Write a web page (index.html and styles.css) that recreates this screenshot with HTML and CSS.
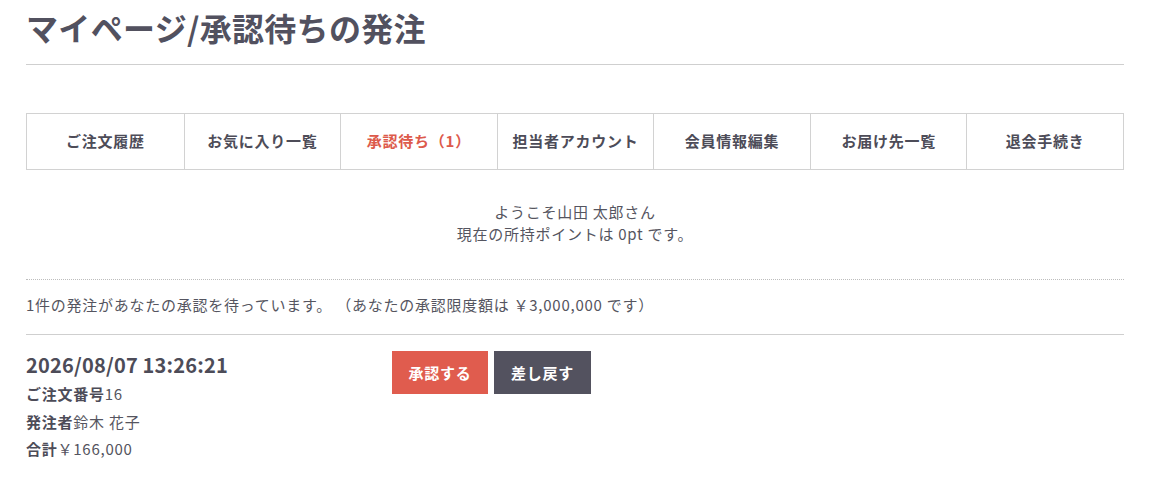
FILE: index.html
```html
<!DOCTYPE html>
<html lang="ja">
<head>
<meta charset="utf-8">
<title>マイページ/承認待ちの発注</title>
<link rel="stylesheet" href="styles.css">
</head>
<body>
<div class="page">
  <h1 class="title">マイページ/承認待ちの発注</h1>
  <nav class="tabs">
    <a class="tab">ご注文履歴</a>
    <a class="tab">お気に入り一覧</a>
    <a class="tab active">承認待ち（1）</a>
    <a class="tab">担当者アカウント</a>
    <a class="tab">会員情報編集</a>
    <a class="tab">お届け先一覧</a>
    <a class="tab">退会手続き</a>
  </nav>
  <div class="welcome">
    <p>ようこそ山田 太郎さん</p>
    <p>現在の所持ポイントは 0pt です。</p>
  </div>
  <p class="notice">1件の発注があなたの承認を待っています。 （あなたの承認限度額は ￥3,000,000 です）</p>
  <div class="order">
    <div class="order-info">
      <div class="order-date">2026/08/07 13:26:21</div>
      <div class="order-line"><b>ご注文番号</b>16</div>
      <div class="order-line"><b>発注者</b>鈴木 花子</div>
      <div class="order-line"><b>合計</b>￥166,000</div>
    </div>
    <div class="order-actions">
      <button class="btn btn-approve">承認する</button>
      <button class="btn btn-return">差し戻す</button>
    </div>
  </div>
</div>
</body>
</html>
```

FILE: styles.css
```css
* { box-sizing: border-box; }
html, body { margin: 0; padding: 0; background: #fff; }
body {
  font-family: "Noto Sans CJK JP", "Noto Sans", sans-serif;
  color: #555560;
  font-size: 15px;
  letter-spacing: 0.05em;
}
.page {
  width: 1098px;
  margin-left: 26px;
}
.title {
  margin: 0;
  padding: 4px 0 14px;
  font-size: 32px;
  line-height: 46px;
  font-weight: 700;
  color: #52515f;
  letter-spacing: 0.01em;
  border-bottom: 1px solid #cfcfcf;
}
.tabs {
  margin-top: 48px;
  display: grid;
  grid-template-columns: repeat(7, 1fr);
  border: 1px solid #d2d2d2;
  height: 57px;
}
.tab {
  display: flex;
  align-items: center;
  justify-content: center;
  padding-bottom: 3px;
  font-weight: 700;
  font-size: 15px;
  color: #4d4c58;
  border-left: 1px solid #d2d2d2;
}
.tab:first-child { border-left: none; }
.tab.active { color: #dd5a4b; }
.welcome {
  padding: 31px 0 34px;
  text-align: center;
  border-bottom: 1px dotted #bdbdbd;
}
.welcome p {
  margin: 0;
  line-height: 22px;
}
.notice {
  margin: 0;
  padding: 14px 0 18px;
  line-height: 22px;
  border-bottom: 1px solid #cfcfcf;
}
.order {
  display: grid;
  grid-template-columns: 366px auto;
  padding-top: 15px;
}
.order-date {
  font-size: 20px;
  font-weight: 700;
  line-height: 30px;
  color: #4d4c58;
  letter-spacing: 0.01em;
}
.order-line {
  line-height: 27.5px;
}
.order-line b { font-weight: 700; color: #4d4c58; }
.order-actions {
  display: flex;
  gap: 6px;
  align-items: flex-start;
  padding-top: 1px;
}
.btn {
  border: none;
  height: 43px;
  width: 96px;
  font-family: inherit;
  font-size: 15px;
  font-weight: 700;
  color: #fff;
  letter-spacing: 0.05em;
}
.btn-approve { background: #e05c4e; }
.btn-return { background: #53525f; width: 97px; }
```
